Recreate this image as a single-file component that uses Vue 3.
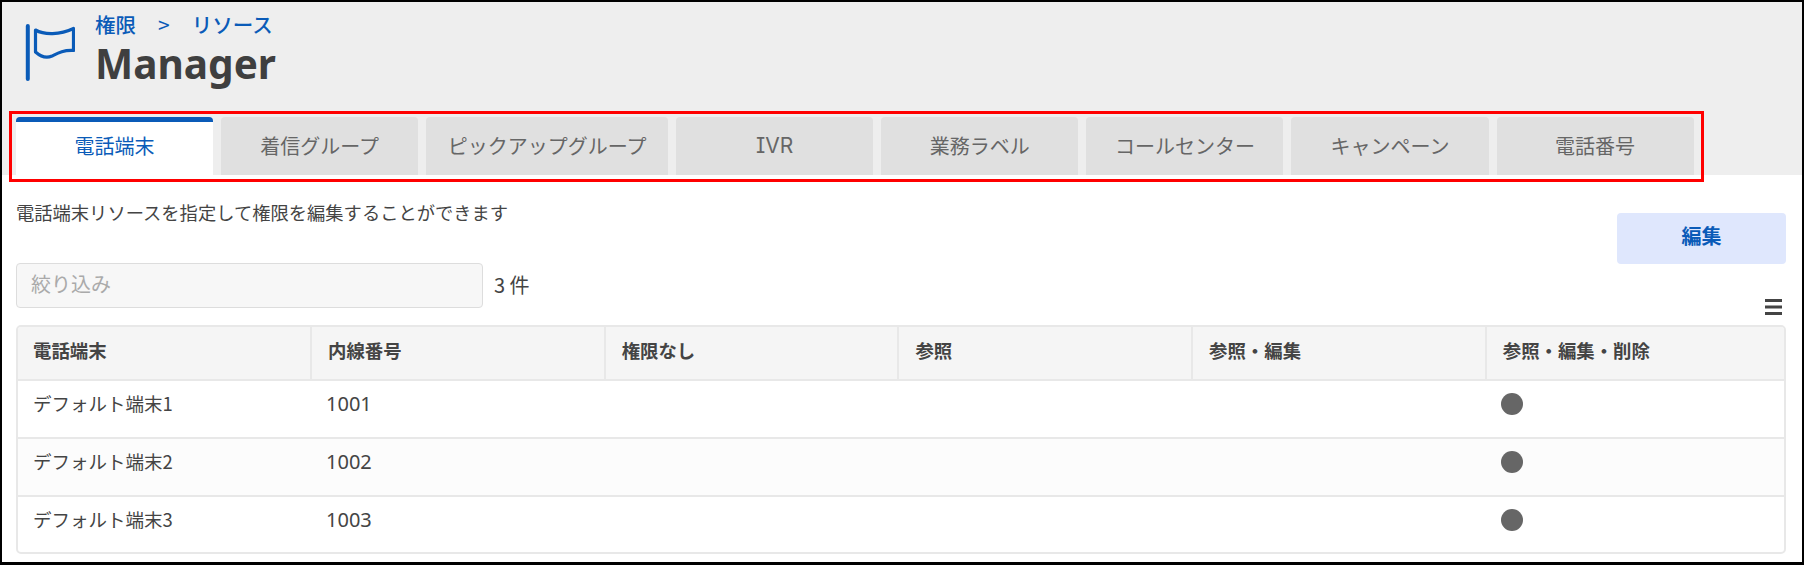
<template>
  <div class="frame">
    <header class="head">
      <div class="title-row">
        <svg class="flag" viewBox="0 0 50 58" width="50" height="58">
          <path d="M2.8 2V55" fill="none" stroke="#0a5bb8" stroke-width="4" stroke-linecap="round" />
          <path d="M10.5 6C19 11 35 11 48.5 4.500V26.500C38 26 33 29 27 32C20 35 15 32 10.500 28Z" fill="none" stroke="#0a5bb8" stroke-width="3.200" stroke-linejoin="round" />
        </svg>
        <div class="title-text">
          <div class="crumb"><span>権限</span><span class="sep">&gt;</span><span>リソース</span></div>
          <h1>Manager</h1>
        </div>
      </div>
      <nav class="tabs">
        <div v-for="(t, i) in tabs" :key="t" class="tab" :class="{ active: i === 0, wide: i === 2, latin: t === 'IVR' }">{{ t }}</div>
        <div class="red-box"></div>
      </nav>
    </header>
    <main class="body">
      <div class="intro">
        <p>電話端末リソースを指定して権限を編集することができます</p>
        <button class="edit">編集</button>
      </div>
      <div class="filter-row">
        <div class="filter">絞り込み</div>
        <span class="count">3 件</span>
        <svg class="menu" viewBox="0 0 17 16" width="17" height="16">
          <path d="M0 1.5H17M0 8H17M0 14.5H17" stroke="#444" stroke-width="3" fill="none" />
        </svg>
      </div>
      <div class="table">
        <div class="row th">
          <div v-for="c in cols" :key="c" class="cell">{{ c }}</div>
        </div>
        <div v-for="(r, i) in rows" :key="r.name" class="row" :class="{ even: i === 1 }">
          <div class="cell">{{ r.name }}</div>
          <div class="cell num">{{ r.ext }}</div>
          <div class="cell"></div>
          <div class="cell"></div>
          <div class="cell"></div>
          <div class="cell"><span class="dot"></span></div>
        </div>
      </div>
    </main>
  </div>
</template>

<script setup>
const tabs = ['電話端末', '着信グループ', 'ピックアップグループ', 'IVR', '業務ラベル', 'コールセンター', 'キャンペーン', '電話番号'];
const cols = ['電話端末', '内線番号', '権限なし', '参照', '参照・編集', '参照・編集・削除'];
const rows = [
  { name: 'デフォルト端末1', ext: '1001' },
  { name: 'デフォルト端末2', ext: '1002' },
  { name: 'デフォルト端末3', ext: '1003' },
];
</script>

<style>
body { margin: 0; background: #000; }
</style>
<style scoped>
.frame {
  width: 1804px;
  height: 565px;
  box-sizing: border-box;
  border: 2px solid #000;
  border-bottom-width: 3px;
  background: #fff;
  color: #444;
  font-family: "Noto Sans CJK JP", "Noto Sans", sans-serif;
  overflow: hidden;
}
.head {
  background: #eee;
  height: 173px;
  box-sizing: border-box;
  padding: 10px 0 0 14px;
  display: flex;
  flex-direction: column;
}
.title-row {
  display: flex;
  gap: 20px;
  height: 105px;
}
.flag {
  margin: 12px 0 0 9px;
}
.crumb {
  display: flex;
  gap: 22px;
  color: #0a5bb8;
  font-size: 20.5px;
  font-weight: 500;
  line-height: 24px;
}
.sep {
  font-size: 21px;
  font-weight: 400;
}
h1 {
  margin: 5px 0 0;
  font-size: 40.5px;
  line-height: 46px;
  font-weight: 700;
  color: #3f3f3f;
  font-family: "Noto Sans", sans-serif;
}
.tabs {
  position: relative;
  display: flex;
  gap: 8px;
  flex: 1;
}
.tab {
  width: 197.1px;
  box-sizing: border-box;
  height: 58px;
  padding-bottom: 2px;
  background: #e0e0e0;
  border-radius: 4px 4px 0 0;
  color: #666;
  font-size: 20px;
  display: flex;
  align-items: center;
  justify-content: center;
}
.tab.wide { width: 242px; }
.tab.latin {
  font-family: Inter, "Noto Sans", sans-serif;
  font-feature-settings: "cv08";
  font-size: 21px;
}
.tab.active {
  background: #fff;
  color: #0a5bb8;
  border-top: 5px solid #0a5bb8;
  padding-bottom: 7px;
}
.red-box {
  position: absolute;
  left: -7px;
  top: -6px;
  width: 1695px;
  height: 71px;
  box-sizing: border-box;
  border: 3px solid #f00;
  pointer-events: none;
}
.body {
  padding: 0 16px 0 14px;
}
.intro {
  display: flex;
  justify-content: space-between;
  align-items: flex-start;
  height: 88px;
}
.intro p {
  margin: 25px 0 0;
  font-size: 18.3px;
  line-height: 24px;
  color: #444;
}
.edit {
  width: 169px;
  height: 51px;
  margin-top: 38px;
  border: 0;
  border-radius: 4px;
  background: #dfe7fd;
  color: #0a5bb8;
  font: 700 20px "Noto Sans CJK JP", sans-serif;
  padding: 0 0 6px;
}
.filter-row {
  display: flex;
  align-items: flex-start;
  height: 62px;
  position: relative;
}
.filter {
  width: 467px;
  height: 45px;
  box-sizing: border-box;
  border: 1px solid #ddd;
  border-radius: 4px;
  background: #f7f7f7;
  color: #aaa;
  font-size: 20px;
  line-height: 40px;
  padding-left: 14px;
}
.count {
  margin-left: 11px;
  font-size: 20px;
  line-height: 44px;
}
.menu {
  margin: 36px 4px 0 auto;
}
.table {
  width: 1770px;
  box-sizing: border-box;
  border: 2px solid #e8e8e8;
  border-radius: 5px;
  overflow: hidden;
}
.row {
  display: grid;
  grid-template-columns: 292px 293.7px 293.7px 293.7px 293.7px 1fr;
  height: 58px;
  border-top: 2px solid #e8e8e8;
  box-sizing: border-box;
}
.row:last-child { height: 57px; }
.row.even { background: #fcfcfc; }
.row.th {
  height: 52px;
  border-top: 0;
  background: #f5f5f5;
  font-weight: 700;
}
.cell {
  padding: 8px 15px 0 15px;
  font-size: 18.5px;
  line-height: 28px;
  color: #444;
}
.cell.num {
  font-family: "Noto Sans", sans-serif;
  font-size: 20px;
  padding: 9px 15px 0 16px;
}
.th .cell {
  font-size: 18.4px;
  border-left: 2px solid #e8e8e8;
  padding: 9px 15px 0 16px;
}
.th .cell:first-child { border-left: 0; padding-left: 15px; }
.dot {
  display: block;
  width: 22px;
  height: 22px;
  margin: 4px 0 0 1px;
  border-radius: 50%;
  background: #666;
}
</style>
